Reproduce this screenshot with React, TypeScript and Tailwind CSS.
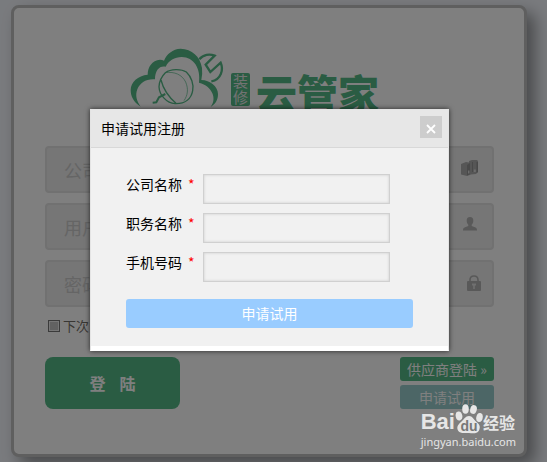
import type { ReactNode } from "react";

function CloudMark() {
  return (
    <svg
      viewBox="30 24 285 180"
      className="h-[60px] w-[95px] shrink-0 text-[#54b886]"
      fill="none"
      aria-hidden="true"
    >
      <path
        fill="currentColor"
        d="M62 200C40 186 32 168 32 150C32 126 54 107 83 104C83 82 96 60 120 59Q127 59 132 62C140 42 158 27 182 26C216 28 240 48 246 84Q248 100 244 120C270 120 294 140 294 162C294 180 286 192 272 201C283 186 282 172 277 160C270 144 258 134 237 128C243 86 222 51 185 51C164 51 146 62 137 80C119 76 105 90 105 118C78 116 60 128 52 148C45 166 50 184 62 200Z"
      />
      <path
        stroke="currentColor"
        strokeWidth="7"
        d="M238 58C250 43 269 41 284 47L257 74L271 96L302 68C311 88 304 119 274 124"
      />
      <path
        stroke="currentColor"
        strokeWidth="4"
        d="M136 98C152 86 184 86 199 96C214 110 222 134 218 152C214 176 196 192 165 191C140 190 118 165 117 140C118 120 126 108 136 98ZM123 120C130 148 145 170 168 190"
      />
      <path
        stroke="currentColor"
        strokeWidth="2"
        d="M136 98C164 94 186 104 197 126C206 148 203 166 192 182"
      />
      <path
        stroke="currentColor"
        strokeWidth="6"
        d="M98 188L109 187L117 172L136 162"
      />
    </svg>
  );
}

function BinderIcon() {
  return (
    <svg viewBox="0 0 18 16" className="h-4 w-[18px]" aria-hidden="true">
      <path fill="#adadad" d="M0 4L5 2L8 2.500V1L11 0H16L17 1V12L15 14L10 14.500L6 16L0 14.500Z" />
      <path fill="#929292" d="M6 5L9 3V14L6 15.500ZM11 2H12V12H11ZM15.500 2H17V12L15.500 13Z" />
      <path fill="#d8d8d8" d="M7 10.500H8.500V13.500H7ZM12.800 9.500H14.800V12H12.800Z" />
    </svg>
  );
}

function UserIcon() {
  return (
    <svg viewBox="0 0 14 14" className="size-[14px]" fill="#b2b2b2" aria-hidden="true">
      <path d="M7 0C9.300 0 10.500 1.600 10.300 4C10.200 5.800 9.500 7 8.700 7.800V9L12.500 10.600C13.600 11.100 14 12 14 13.500H0C0 12 .4 11.100 1.500 10.600L5.300 9V7.800C4.500 7 3.800 5.800 3.700 4C3.500 1.600 4.700 0 7 0Z" />
    </svg>
  );
}

function LockIcon() {
  return (
    <svg viewBox="0 0 14 16" className="h-4 w-[14px]" aria-hidden="true">
      <path fill="none" stroke="#b2b2b2" strokeWidth="1.600" d="M3 7V5C3 2.300 4.500 1 7 1S11 2.300 11 5V7" />
      <rect y="6" width="14" height="10" rx="1" fill="#b2b2b2" />
      <path fill="#e0e0e0" d="M5 8.500H9V10.500H7.800V14H6.200V10.500H5Z" />
    </svg>
  );
}

function PawIcon() {
  return (
    <svg viewBox="0 0 28 30" className="h-[30px] w-7" fill="#e6e6e6" aria-hidden="true">
      <ellipse cx="4" cy="12" rx="3.300" ry="4.500" transform="rotate(-12 4 12)" />
      <ellipse cx="10.500" cy="5" rx="3.300" ry="4.700" />
      <ellipse cx="18.500" cy="5.500" rx="3.300" ry="4.500" transform="rotate(14 18.500 5.500)" />
      <ellipse cx="24.500" cy="13.500" rx="3.200" ry="4.500" transform="rotate(12 24.500 13.500)" />
      <path d="M14 12C17.500 12 18.500 15.500 21.500 18C25 21 25.500 23 24 26.500C22 30 18 29.500 14 29S5.500 30 3.300 27C1.300 23.500 2.500 21 6 18C9 15.500 10.500 12 14 12Z" />
    </svg>
  );
}

const LOGIN_FIELDS: {
  id: string;
  label: string;
  type: string;
  icon: ReactNode;
  pad: string;
}[] = [
  { id: "company", label: "公司名称", type: "text", icon: <BinderIcon />, pad: "pr-[13px] pb-1" },
  { id: "user", label: "用户名", type: "text", icon: <UserIcon />, pad: "pr-[15px] pb-1.5" },
  { id: "password", label: "密码", type: "password", icon: <LockIcon />, pad: "pr-[11px] pb-0.5" },
];

const TRIAL_FIELDS = [
  { id: "trial-company", label: "公司名称" },
  { id: "trial-job", label: "职务名称" },
  { id: "trial-phone", label: "手机号码" },
];

function LoginCard() {
  return (
    <main className="rounded-lg border-3 border-[#bebebe] bg-white pt-10 pr-[30px] pb-[45px] pl-[31px] shadow-[8px_8px_16px_rgba(0,0,0,0.4)]">
      <h1 className="flex h-[98px] items-start justify-center gap-[6px] pr-[30px]">
        <CloudMark />
        <span className="mt-[25px] h-[33px] w-[19px] shrink-0 rounded-xs bg-[#54b886] px-[2px] text-[15px] leading-4 font-normal text-[#e6e6e6]">
          装修
        </span>
        <span className="mt-6 text-[41px] leading-10 font-black whitespace-nowrap text-[#54b886]">
          云管家
        </span>
      </h1>
      <form>
        <div className="flex flex-col gap-[10px]">
          {LOGIN_FIELDS.map((f) => (
            <div
              key={f.id}
              className="flex h-[47px] items-center rounded border-2 border-[#e2e2e2] bg-[#ececec]"
            >
              <input
                id={f.id}
                type={f.type}
                placeholder={f.label}
                aria-label={f.label}
                className="h-full min-w-0 flex-1 bg-transparent pl-[17px] text-[18px] outline-none placeholder:text-[#cacaca]"
              />
              <span className={f.pad}>{f.icon}</span>
            </div>
          ))}
        </div>
        <label className="mt-2 flex h-[22px] items-center gap-[3px] pl-[3px] text-[13px] text-[#736f68]">
          <input
            type="checkbox"
            className="size-3 appearance-none border border-[#777] bg-[#c4c4c4] shadow-[inset_0_0_0_1px_#eee]"
          />
          下次自动登录
        </label>
        <div className="mt-5 flex items-start justify-between">
          <button
            type="submit"
            className="flex h-[52px] w-[135px] items-center justify-center gap-[14px] rounded-lg bg-[#54b886] text-[16px] font-bold text-white"
          >
            <span>登</span>
            <span>陆</span>
          </button>
          <div className="flex w-[94px] flex-col gap-1 text-[14px] leading-6 text-white">
            <a href="#supplier" className="rounded-[3px] bg-[#54b886] text-center whitespace-nowrap">
              供应商登陆 »
            </a>
            <button type="button" className="rounded-[3px] bg-[#98cccc]">
              申请试用
            </button>
          </div>
        </div>
      </form>
    </main>
  );
}

function TrialDialog() {
  return (
    <section
      role="dialog"
      aria-labelledby="trial-title"
      className="w-[359px] border border-[#e4e4e4] border-b-white bg-white text-[14px] text-black shadow-[0_0_5px_rgba(0,0,0,0.7)]"
    >
      <header className="flex h-[38px] items-center justify-between border-b border-[#d8d8d8] bg-[#e7e7e7] pr-[6px] pl-[10px]">
        <h2 id="trial-title">申请试用注册</h2>
        <button
          type="button"
          aria-label="关闭"
          className="mb-1 grid size-[22px] place-items-center bg-[#cdcdcd]"
        >
          <svg viewBox="0 0 10 10" className="mt-1 size-[10px]" stroke="#fff" strokeWidth="1.800" aria-hidden="true">
            <path d="M1 1L9 9M9 1L1 9" />
          </svg>
        </button>
      </header>
      <form className="bg-[#f1f1f1] px-[35px] pt-[26px] pb-[18px]">
        <div className="flex flex-col gap-[9px]">
          {TRIAL_FIELDS.map((f) => (
            <div key={f.id} className="flex h-[30px] items-start">
              <label htmlFor={f.id} className="flex w-[77px] gap-[6px] leading-5">
                {f.label}
                <span className="text-[#ff0000]">*</span>
              </label>
              <input
                id={f.id}
                type="text"
                className="h-full w-[187px] border border-[#d0d0d0] bg-[#f1f1f1] px-2 shadow-[inset_0_0_3px_rgba(0,0,0,0.15)] outline-none"
              />
            </div>
          ))}
        </div>
        <button
          type="submit"
          className="mt-[17px] h-[29px] w-full rounded-[3px] bg-[#99ccff] text-white"
        >
          申请试用
        </button>
      </form>
      <div className="h-1 bg-white" />
    </section>
  );
}

function Watermark() {
  return (
    <div className="absolute right-[31px] bottom-3 text-[#e6e6e6]">
      <div className="flex items-end font-bold">
        <span className="font-['Liberation_Sans'] text-[22px] leading-6">Bai</span>
        <span className="relative">
          <PawIcon />
          <span className="absolute inset-x-0 bottom-0 text-center font-['Liberation_Sans'] text-[14px] leading-4 text-[#777]">
            du
          </span>
        </span>
        <span className="text-[16px] leading-6">经验</span>
      </div>
      <p className="font-['Noto_Sans'] text-[11px] leading-4">jingyan.baidu.com</p>
    </div>
  );
}

export default function App() {
  return (
    <div className="relative min-h-screen bg-[#f3f6fc] pt-[5px] pr-5 pb-[5px] pl-[11px] font-['Noto_Sans_CJK_SC',sans-serif]">
      <LoginCard />
      <div className="absolute inset-0 flex items-start justify-center bg-black/50 pt-[109px] pr-2">
        <TrialDialog />
      </div>
      <Watermark />
    </div>
  );
}
